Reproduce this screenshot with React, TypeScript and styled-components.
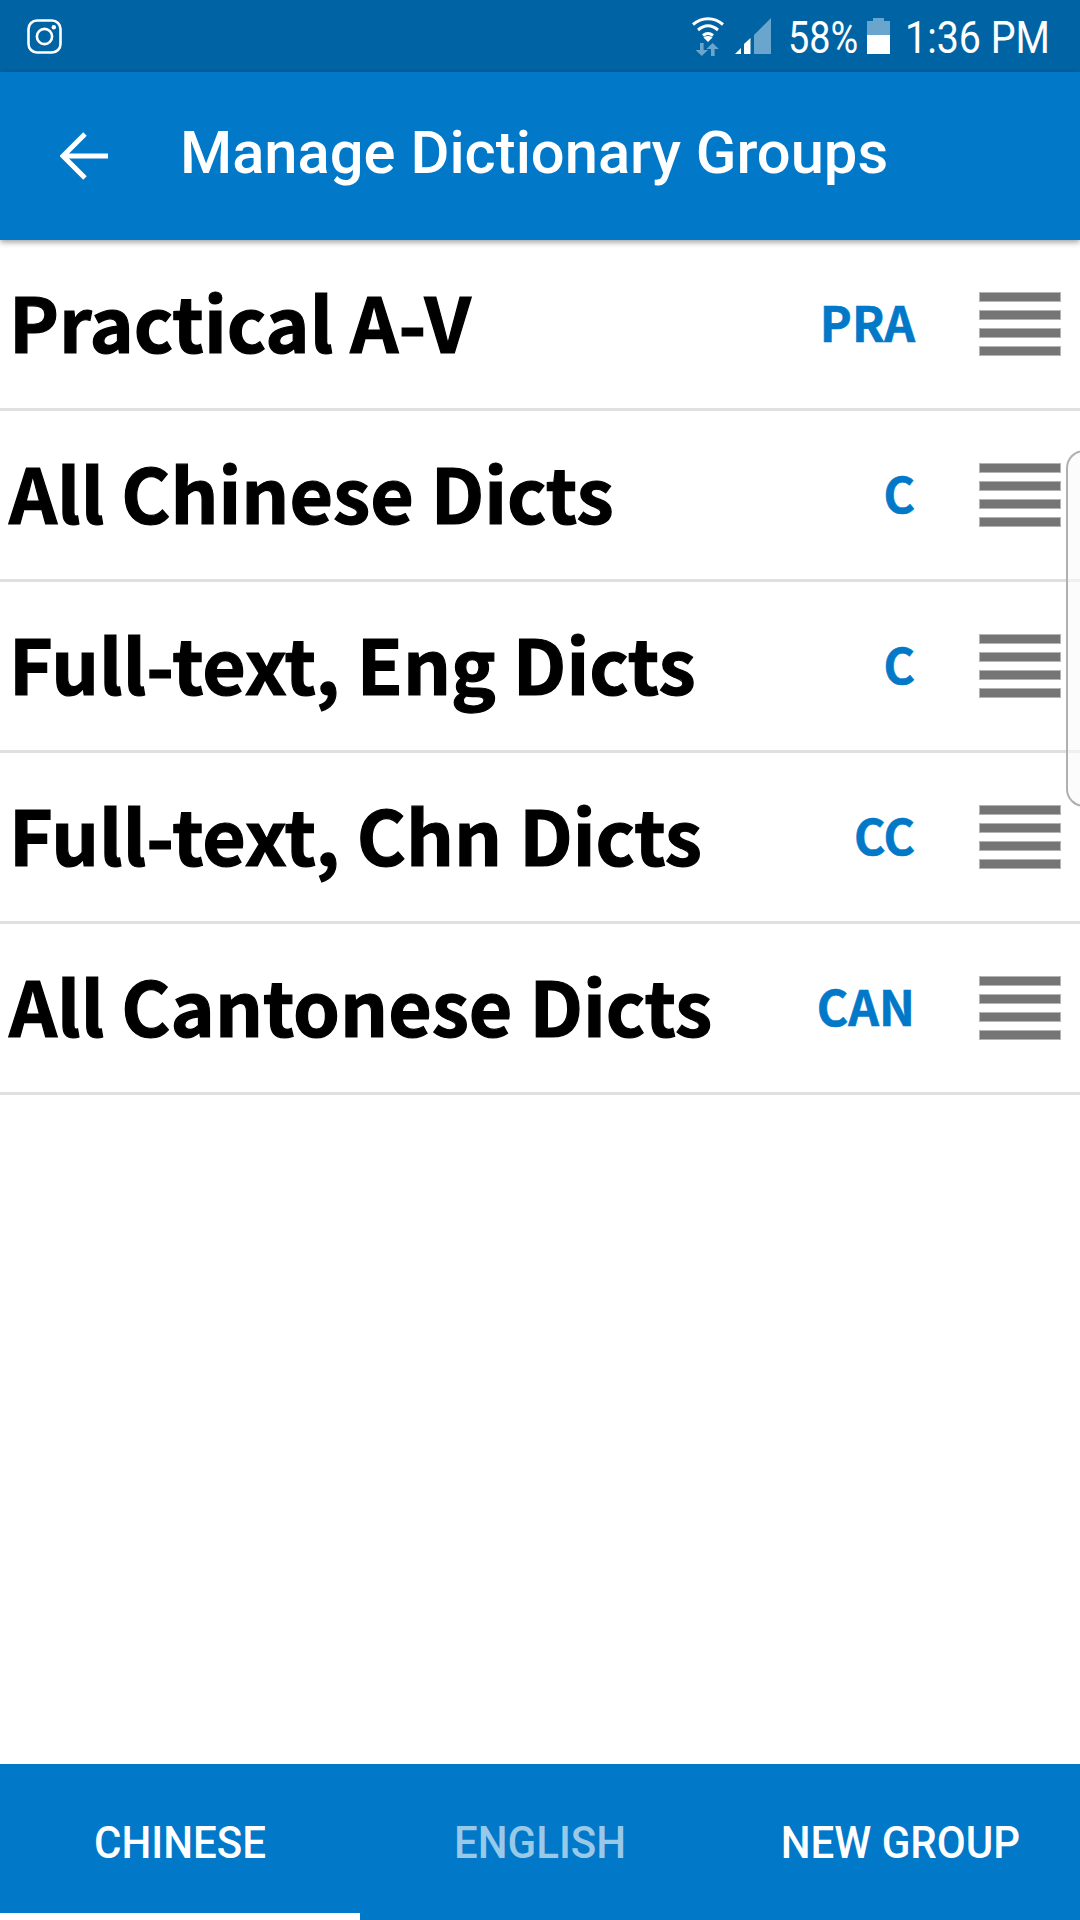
import styled, { createGlobalStyle } from "styled-components";

const GlobalStyle = createGlobalStyle`
  html, body {
    margin: 0;
    padding: 0;
    background: #fff;
  }
`;

const Screen = styled.div`
  position: relative;
  width: 1080px;
  height: 1920px;
  display: flex;
  flex-direction: column;
  overflow: hidden;
  background: #fff;
`;

const StatusBar = styled.div`
  height: 72px;
  flex: none;
  display: flex;
  align-items: center;
  justify-content: space-between;
  padding: 0 31px 0 27px;
  background: #0064a4;
  color: #fff;
`;

const StatusRight = styled.div`
  display: flex;
  align-items: center;
`;

const StatusText = styled.span<{ $width: number; $scale: number }>`
  display: inline-block;
  width: ${(p) => p.$width}px;
  font-family: Roboto, sans-serif;
  font-size: 45px;
  line-height: 72px;
  padding-top: 4px;
  white-space: nowrap;
  transform: scaleX(${(p) => p.$scale});
  transform-origin: left center;
`;

const AppBar = styled.header`
  position: relative;
  z-index: 1;
  height: 168px;
  flex: none;
  display: flex;
  align-items: center;
  padding-left: 60px;
  background: #0178c8;
  box-shadow: 0 2px 6px rgba(0, 0, 0, 0.4);
`;

const BackIcon = styled.svg`
  width: 48px;
  height: 48px;
  margin-right: 72px;
  flex: none;
`;

const Title = styled.h1`
  margin: 0 0 7px;
  font-family: Roboto, sans-serif;
  font-size: 59.7px;
  font-weight: 500;
  color: #fff;
  white-space: nowrap;
`;

const GroupList = styled.ul`
  flex: 1;
  margin: 0;
  padding: 0;
  list-style: none;
`;

const GroupRow = styled.li`
  height: 171px;
  box-sizing: border-box;
  display: flex;
  align-items: center;
  padding: 0 19px 0 9px;
  border-bottom: 3px solid #e0e0e0;
`;

const GroupName = styled.span`
  flex: 1;
  margin-bottom: 7px;
  font-family: "Noto Sans CJK SC", sans-serif;
  font-size: 75px;
  font-weight: 700;
  -webkit-text-stroke: 1.2px #000;
  color: #000;
  white-space: nowrap;
`;

const GroupCode = styled.span`
  margin: 0 64px 6px 0;
  font-family: "Noto Sans CJK SC", sans-serif;
  font-size: 48px;
  font-weight: 700;
  -webkit-text-stroke: 0.6px #0178c8;
  color: #0178c8;
`;

const DragHandle = styled.div`
  width: 82px;
  flex: none;
  display: flex;
  flex-direction: column;
  gap: 8px;
`;

const DragBar = styled.span`
  height: 10px;
  box-sizing: border-box;
  background: #757575;
  border: 1px solid #b4b4b4;
`;

const EdgePanel = styled.div`
  position: absolute;
  top: 450px;
  right: -4px;
  width: 18px;
  height: 357px;
  box-sizing: border-box;
  border: 2px solid #b0b0b0;
  border-radius: 20px 0 0 20px;
  background: rgba(250, 250, 250, 0.6);
`;

const TabBar = styled.nav`
  height: 156px;
  flex: none;
  display: grid;
  grid-template-columns: repeat(3, 360px);
  background: #0178c8;
`;

const Tab = styled.div<{ $dim?: boolean; $active?: boolean }>`
  position: relative;
  display: flex;
  align-items: center;
  justify-content: center;
  padding-top: 2px;
  font-family: Roboto, sans-serif;
  font-size: 44px;
  font-weight: 500;
  color: ${(p) => (p.$dim ? "#99c9e9" : "#fff")};

  &::after {
    content: "";
    display: ${(p) => (p.$active ? "block" : "none")};
    position: absolute;
    left: 0;
    right: 0;
    bottom: 0;
    height: 7px;
    background: #fff;
  }
`;

const TabLabel = styled.span`
  display: inline-block;
  transform: scaleX(0.955);
  white-space: nowrap;
`;

const groups = [
  { name: "Practical A-V", code: "PRA" },
  { name: "All Chinese Dicts", code: "C" },
  { name: "Full-text, Eng Dicts", code: "C" },
  { name: "Full-text, Chn Dicts", code: "CC" },
  { name: "All Cantonese Dicts", code: "CAN" },
];

function InstagramIcon() {
  return (
    <svg width="35" height="35" viewBox="0 0 35 35" fill="none" stroke="#fff" strokeWidth="2.6">
      <rect x="1.5" y="1.5" width="32" height="32" rx="8.5" />
      <circle cx="17.5" cy="17.5" r="7.6" />
      <circle cx="26.8" cy="8.2" r="2.2" fill="#fff" stroke="none" />
    </svg>
  );
}

function WifiIcon() {
  return (
    <svg width="34" height="40" viewBox="0 0 34 40" style={{ marginRight: 10 }}>
      <g fill="none" stroke="#fff" strokeWidth="3">
        <path d="M2 8.5C11 .8 23 .8 32 8.5" />
        <path d="M7 14C13.5 8.5 20.5 8.5 27 14" />
        <path d="M12 19.5C15.5 16.8 18.5 16.8 22 19.5" />
      </g>
      <path d="M17 26L12.5 21.5C15.500 19.6 18.5 19.6 21.5 21.5Z" fill="#fff" />
      <path d="M9 27h3.600v7H17l-6.200 6-6.200-6h4.400zM21.600 27l6.200 6h-4.200v7H20v-7h-4.600z" fill="#6aa5cd" />
    </svg>
  );
}

function SignalIcon() {
  return (
    <svg width="36" height="36" viewBox="0 0 36 36" style={{ marginRight: 17 }}>
      <path d="M0 36L6 30V36Z" fill="#fff" />
      <path d="M9 36V26L15.500 20V36Z" fill="#fff" />
      <path d="M19 36V17L36 0V36Z" fill="#6aa5cd" />
    </svg>
  );
}

function BatteryIcon() {
  return (
    <svg width="23" height="36" viewBox="0 0 23 36" style={{ marginRight: 15 }}>
      <path d="M0 17V3H6V0H17V3H23V17Z" fill="#6aa5cd" />
      <rect y="17" width="23" height="19" fill="#fff" />
    </svg>
  );
}

export default function App() {
  return (
    <Screen>
      <GlobalStyle />
      <StatusBar>
        <InstagramIcon />
        <StatusRight>
          <WifiIcon />
          <SignalIcon />
          <StatusText $width={79} $scale={0.84}>
            58%
          </StatusText>
          <BatteryIcon />
          <StatusText $width={144} $scale={0.875}>
            1:36 PM
          </StatusText>
        </StatusRight>
      </StatusBar>
      <AppBar>
        <BackIcon viewBox="0 0 48 48" fill="none" stroke="#fff" strokeWidth="5">
          <path d="M48 24H3M25 2L3 24L25 46" />
        </BackIcon>
        <Title>Manage Dictionary Groups</Title>
      </AppBar>
      <GroupList>
        {groups.map((group) => (
          <GroupRow key={group.name}>
            <GroupName>{group.name}</GroupName>
            <GroupCode>{group.code}</GroupCode>
            <DragHandle>
              <DragBar />
              <DragBar />
              <DragBar />
              <DragBar />
            </DragHandle>
          </GroupRow>
        ))}
      </GroupList>
      <TabBar>
        <Tab $active>
          <TabLabel>CHINESE</TabLabel>
        </Tab>
        <Tab $dim>
          <TabLabel>ENGLISH</TabLabel>
        </Tab>
        <Tab>
          <TabLabel>NEW GROUP</TabLabel>
        </Tab>
      </TabBar>
      <EdgePanel />
    </Screen>
  );
}
